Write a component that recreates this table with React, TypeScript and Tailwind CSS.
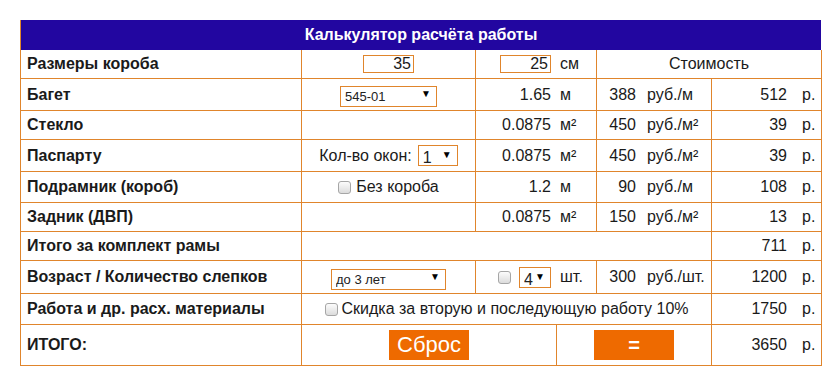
import React, { useState } from 'react'

const line = 'border-[#e0852c]'

interface CheckProps {
  checked: boolean
  onChange: (v: boolean) => void
}

const Check: React.FC<CheckProps> = ({ checked, onChange }) => (
  <button
    type="button"
    onClick={() => onChange(!checked)}
    className="relative w-[13px] h-[13px] shrink-0 rounded-[3px] border border-[#a6a6a6] bg-gradient-to-b from-[#fcfcfc] to-[#dcdcdc]"
  >
    {checked && (
      <span className="absolute inset-0 flex items-center justify-center text-[10px] leading-none text-[#222]">✓</span>
    )}
  </button>
)

interface SelectProps {
  value: string
  options: string[]
  width: string
  onChange: (v: string) => void
  big?: boolean
}

const Select: React.FC<SelectProps> = ({ value, options, width, onChange, big }) => (
  <div className={`relative h-[21px] ${width}`}>
    <select
      value={value}
      onChange={(e) => onChange(e.target.value)}
      className={`appearance-none w-full h-full border ${line} bg-white pl-[4px] ${
        big ? 'text-[16px]' : 'text-[13px]'
      } text-[#222] outline-none`}
    >
      {options.map((o) => (
        <option key={o}>{o}</option>
      ))}
    </select>
    <span className="pointer-events-none absolute right-[6px] top-[5px] text-[10px] leading-none text-black">▼</span>
  </div>
)

const Num: React.FC<{ n: React.ReactNode; unit: string; w: string; gap: string }> = ({ n, unit, w, gap }) => (
  <div className="flex items-center h-full">
    <span className={`${w} flex justify-end items-center`}>{n}</span>
    <span className={gap}>{unit}</span>
  </div>
)

const cell = `border-r border-b ${line} flex items-center`

export default function App() {
  const [w, setW] = useState('35')
  const [h, setH] = useState('25')
  const [baget, setBaget] = useState('545-01')
  const [windows, setWindows] = useState('1')
  const [noBox, setNoBox] = useState(false)
  const [age, setAge] = useState('до 3 лет')
  const [castCheck, setCastCheck] = useState(false)
  const [casts, setCasts] = useState('4')
  const [discount, setDiscount] = useState(false)

  const rows = [
    { label: 'Багет', mid: <Select value={baget} options={['545-01', '545-02', '612-03']} width="w-[97px]" onChange={setBaget} />, q: '1.65', qu: 'м', p: '388', pu: 'руб./м', s: '512', hgt: 'h-[32px]' },
    { label: 'Стекло', mid: null, q: '0.0875', qu: 'м²', p: '450', pu: 'руб./м²', s: '39', hgt: 'h-[29px]' },
    {
      label: 'Паспарту',
      mid: (
        <div className="flex items-center gap-[6px]">
          <span>Кол-во окон:</span>
          <Select value={windows} options={['1', '2', '3']} width="w-[40px]" onChange={setWindows} big />
        </div>
      ),
      q: '0.0875', qu: 'м²', p: '450', pu: 'руб./м²', s: '39', hgt: 'h-[32px]',
    },
    {
      label: 'Подрамник (короб)',
      mid: (
        <div className="flex items-center gap-[5px]">
          <Check checked={noBox} onChange={setNoBox} />
          <span>Без короба</span>
        </div>
      ),
      q: '1.2', qu: 'м', p: '90', pu: 'руб./м', s: '108', hgt: 'h-[31px]',
    },
    { label: 'Задник (ДВП)', mid: null, q: '0.0875', qu: 'м²', p: '150', pu: 'руб./м²', s: '13', hgt: 'h-[29px]' },
  ]

  return (
    <div className="w-[840px] h-[387px] bg-white pt-[20px] pl-[20px] text-[16px] text-[#1a1a1a]" style={{ fontFamily: '"Liberation Sans", Arial, sans-serif' }}>
      <div className={`w-[801px] border-l ${line}`}>
        <div className="h-[30px] bg-[#2206a0] flex items-center justify-center text-white font-bold text-[16px]">
          Калькулятор расчёта работы
        </div>

        {/* Размеры */}
        <div className="grid grid-cols-[281px_174px_121px_225px] h-[29px]">
          <div className={`${cell} pl-[6px] font-bold`}>Размеры короба</div>
          <div className={`${cell} justify-center`}>
            <input
              value={w}
              onChange={(e) => setW(e.target.value)}
              className={`w-[51px] h-[18px] border ${line} text-right pr-[2px] text-[16px] outline-none`}
            />
          </div>
          <div className={cell}>
            <Num
              w="w-[75px]"
              gap="ml-[9px]"
              unit="см"
              n={
                <input
                  value={h}
                  onChange={(e) => setH(e.target.value)}
                  className={`w-[51px] h-[18px] border ${line} text-right pr-[2px] text-[16px] outline-none`}
                />
              }
            />
          </div>
          <div className={`${cell} justify-center`}>Стоимость</div>
        </div>

        {rows.map((r) => (
          <div key={r.label} className={`grid grid-cols-[281px_174px_121px_115px_110px] ${r.hgt}`}>
            <div className={`${cell} pl-[6px] font-bold`}>{r.label}</div>
            <div className={`${cell} justify-center`}>{r.mid}</div>
            <div className={cell}>
              <Num n={r.q} unit={r.qu} w="w-[75px]" gap="ml-[9px]" />
            </div>
            <div className={cell}>
              <Num n={r.p} unit={r.pu} w="w-[39px]" gap="ml-[11px]" />
            </div>
            <div className={cell}>
              <Num n={r.s} unit="р." w="w-[75px]" gap="ml-[15px]" />
            </div>
          </div>
        ))}

        {/* Итого за комплект */}
        <div className="grid grid-cols-[281px_410px_110px] h-[29px]">
          <div className={`${cell} pl-[6px] font-bold`}>Итого за комплект рамы</div>
          <div className={cell}></div>
          <div className={cell}>
            <Num n="711" unit="р." w="w-[75px]" gap="ml-[15px]" />
          </div>
        </div>

        {/* Возраст */}
        <div className="grid grid-cols-[281px_174px_121px_115px_110px] h-[33px]">
          <div className={`${cell} pl-[6px] font-bold`}>Возраст / Количество слепков</div>
          <div className={`${cell} justify-center`}>
            <Select value={age} options={['до 3 лет', 'от 3 до 7 лет', 'старше 7 лет']} width="w-[115px]" onChange={setAge} />
          </div>
          <div className={cell}>
            <Num
              w="w-[75px]"
              gap="ml-[9px]"
              unit="шт."
              n={
                <div className="flex items-center gap-[8px]">
                  <Check checked={castCheck} onChange={setCastCheck} />
                  <Select value={casts} options={['1', '2', '3', '4', '5']} width="w-[32px]" onChange={setCasts} big />
                </div>
              }
            />
          </div>
          <div className={cell}>
            <Num n="300" unit="руб./шт." w="w-[39px]" gap="ml-[11px]" />
          </div>
          <div className={cell}>
            <Num n="1200" unit="р." w="w-[75px]" gap="ml-[15px]" />
          </div>
        </div>

        {/* Работа */}
        <div className="grid grid-cols-[281px_410px_110px] h-[31px]">
          <div className={`${cell} pl-[6px] font-bold`}>Работа и др. расх. материалы</div>
          <div className={`${cell} justify-center gap-[4px]`}>
            <Check checked={discount} onChange={setDiscount} />
            <span>Скидка за вторую и последующую работу 10%</span>
          </div>
          <div className={cell}>
            <Num n="1750" unit="р." w="w-[75px]" gap="ml-[15px]" />
          </div>
        </div>

        {/* Итого */}
        <div className="grid grid-cols-[281px_255px_155px_110px] h-[41px]">
          <div className={`${cell} pl-[6px] font-bold`}>ИТОГО:</div>
          <div className={`${cell} justify-center`}>
            <button type="button" className="w-[80px] h-[30px] bg-[#ee6a00] text-white text-[22px] leading-none">
              Сброс
            </button>
          </div>
          <div className={`${cell} justify-center`}>
            <button type="button" className="w-[80px] h-[30px] bg-[#ee6a00] text-white text-[20px] font-bold leading-none">
              =
            </button>
          </div>
          <div className={cell}>
            <Num n="3650" unit="р." w="w-[75px]" gap="ml-[15px]" />
          </div>
        </div>
      </div>
    </div>
  )
}
